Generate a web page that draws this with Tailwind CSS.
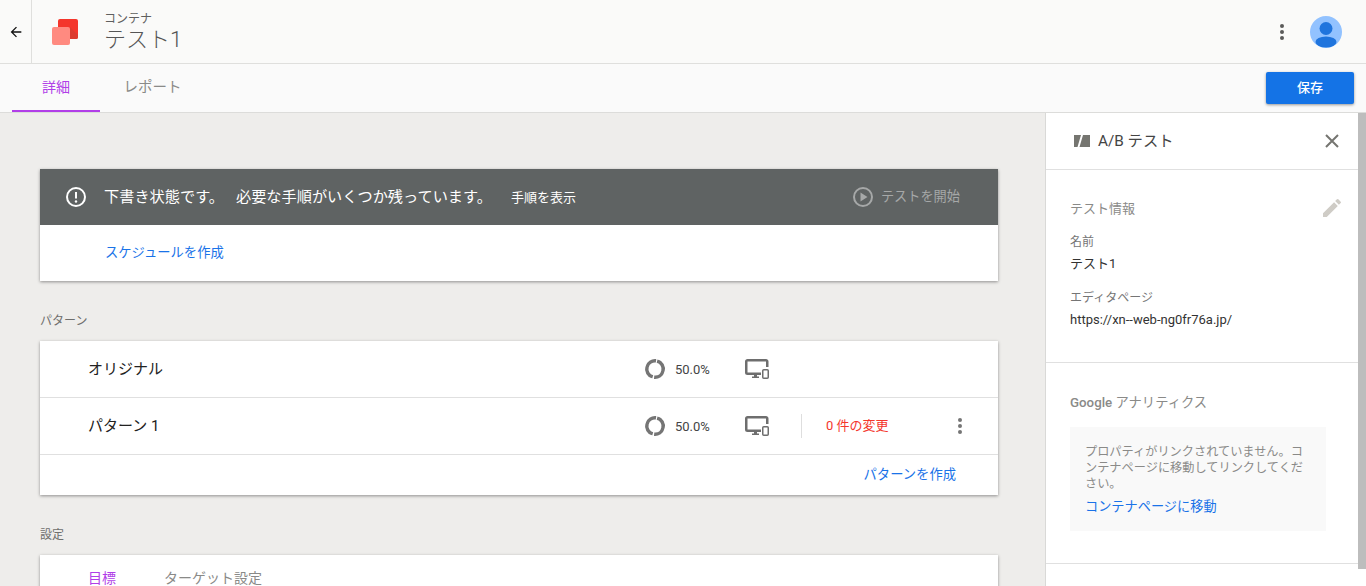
<!DOCTYPE html>
<html lang="ja">
<head>
  <meta charset="UTF-8" />
  <title>テスト1</title>
  <script src="https://cdn.jsdelivr.net/npm/@tailwindcss/browser@4"></script>
</head>
<body class="bg-[#eeedeb] font-['Roboto','Noto_Sans_CJK_JP',sans-serif] text-[#3c3c3c]">
  <div class="flex flex-col h-[586px] w-[1366px] overflow-hidden">

    <!-- header -->
    <header class="flex items-center h-[64px] shrink-0 bg-[#fafaf9] border-b border-[#dfdfdd]">
      <div class="flex items-center justify-center w-[32px] h-[63px] border-r border-[#dfdfdd]">
        <svg width="16" height="16" viewBox="0 0 24 24" fill="#111"><path d="M20 11H7.830l5.590-5.590L12 4l-8 8 8 8 1.410-1.410L7.830 13H20z"/></svg>
      </div>
      <svg class="ml-[20px]" width="26" height="26" viewBox="0 0 26 26">
        <rect x="6" y="0" width="20" height="20" rx="2" fill="#f4362c"/>
        <path d="M18 8l8 8v2a2 2 0 0 1-2 2h-6z" fill="#dc3b2f"/>
        <rect x="0" y="8" width="18" height="18" rx="2" fill="#ff8a80"/>
      </svg>
      <div class="ml-[26px] flex flex-col mt-[2px]">
        <span class="text-[12px] leading-[14px] text-[#5f5f5f] mt-[-1px]">コンテナ</span>
        <span class="text-[22px] leading-[26px] font-light text-[#555] mt-[1px]">テスト1</span>
      </div>
      <div class="ml-auto flex items-center">
        <svg width="4" height="16" viewBox="0 0 4 16" fill="#5a5a5a"><circle cx="2" cy="2" r="2"/><circle cx="2" cy="8" r="2"/><circle cx="2" cy="14" r="2"/></svg>
        <svg class="ml-[26px] mr-[24px]" width="32" height="32" viewBox="0 0 32 32">
          <clipPath id="avatar"><circle cx="16" cy="16" r="16"/></clipPath>
          <circle cx="16" cy="16" r="16" fill="#92c2ff"/>
          <circle cx="16" cy="12.500" r="6.500" fill="#1f74dd"/>
          <ellipse cx="16" cy="26" rx="10.500" ry="5.500" fill="#1f74dd" clip-path="url(#avatar)"/>
        </svg>
      </div>
    </header>

    <!-- tabs -->
    <div class="flex items-stretch h-[49px] shrink-0 bg-[#fafafa] border-b border-[#dcdcda] pl-[12px] pr-[12px] relative">
      <div class="w-[88px] flex items-center justify-center text-[14px] text-[#b13fe8] border-b-2 border-[#b13fe8] h-[48px]">詳細</div>
      <div class="w-[105px] flex items-center justify-center text-[14.500px] text-[#8a8a88]">レポート</div>
      <button class="ml-auto self-start mt-[8px] w-[88px] h-[32px] rounded-[2px] bg-[#1473e6] text-white text-[13px] font-medium shadow-[0_1px_3px_rgba(0,0,0,0.4)]">保存</button>
    </div>

    <div class="flex flex-1 min-h-0">
      <!-- main column -->
      <main class="w-[1045px] shrink-0 pl-[40px] pr-[47px] pt-[56px]">
        <section class="bg-white shadow-[0_1px_3px_rgba(0,0,0,0.4)]">
          <div class="flex items-center h-[56px] bg-[#5f6363] text-white pl-[25px] pr-[38px]">
            <svg width="22" height="22" viewBox="0 0 22 22" fill="none"><circle cx="11" cy="11" r="9" stroke="#fff" stroke-width="2"/><path d="M11 6v6.500" stroke="#fff" stroke-width="2"/><circle cx="11" cy="15.500" r="1.200" fill="#fff"/></svg>
            <span class="ml-[17px] text-[15.200px]">下書き状態です。</span>
            <span class="ml-[12px] text-[15.200px]">必要な手順がいくつか残っています。</span>
            <span class="ml-[19px] text-[13px] mt-[2px]">手順を表示</span>
            <div class="ml-auto flex items-center text-[#a6a8a8] text-[13.200px]">
              <svg width="22" height="22" viewBox="0 0 22 22" fill="none"><circle cx="11" cy="11" r="9" stroke="#a6a8a8" stroke-width="2"/><path d="M8.500 6.500v9l7-4.500z" fill="#a6a8a8"/></svg>
              <span class="ml-[7px]">テストを開始</span>
            </div>
          </div>
          <div class="flex items-center h-[56px] pl-[65px] pb-[1px] text-[13.300px] text-[#1a73e8]">スケジュールを作成</div>
        </section>

        <h2 class="mt-[30px] h-[20px] text-[12px] leading-[20px] text-[#6f6f6d]">パターン</h2>
        <section class="mt-[10px] bg-white shadow-[0_1px_3px_rgba(0,0,0,0.4)]">
          <div class="flex items-center h-[57px] pl-[48px] border-b border-[#e0e0e0]">
            <span class="w-[557px] text-[15px] text-[#222]">オリジナル</span>
            <svg class="rotate-[-75deg]" width="20" height="20" viewBox="0 0 20 20" fill="none"><circle cx="10" cy="10" r="8.250" stroke="#757575" stroke-width="3.500" stroke-dasharray="24.420 1.500 24.420 1.500"/></svg>
            <span class="ml-[10px] mt-[2px] w-[70px] text-[13px] text-[#444]">50.0%</span>
            <svg width="24" height="20" viewBox="0 0 24 20" fill="none" stroke="#6e6e6e" stroke-width="2.500"><path d="M16 14.750H2.500a1.250 1.250 0 0 1-1.250-1.250V2.500a1.250 1.250 0 0 1 1.250-1.250h18.500a1.250 1.250 0 0 1 1.250 1.250V8"/><path d="M9 15h3v2.500h2V19H7v-1.500h2z" fill="#6e6e6e" stroke="none"/><rect x="17.750" y="10.750" width="5.500" height="8.500" rx="1" stroke-width="1.500"/></svg>
          </div>
          <div class="flex items-center h-[57px] pl-[48px] border-b border-[#e0e0e0]">
            <span class="w-[557px] text-[15px] text-[#222]">パターン 1</span>
            <svg class="rotate-[-75deg]" width="20" height="20" viewBox="0 0 20 20" fill="none"><circle cx="10" cy="10" r="8.250" stroke="#757575" stroke-width="3.500" stroke-dasharray="24.420 1.500 24.420 1.500"/></svg>
            <span class="ml-[10px] mt-[2px] w-[70px] text-[13px] text-[#444]">50.0%</span>
            <svg width="24" height="20" viewBox="0 0 24 20" fill="none" stroke="#6e6e6e" stroke-width="2.500"><path d="M16 14.750H2.500a1.250 1.250 0 0 1-1.250-1.250V2.500a1.250 1.250 0 0 1 1.250-1.250h18.500a1.250 1.250 0 0 1 1.250 1.250V8"/><path d="M9 15h3v2.500h2V19H7v-1.500h2z" fill="#6e6e6e" stroke="none"/><rect x="17.750" y="10.750" width="5.500" height="8.500" rx="1" stroke-width="1.500"/></svg>
            <div class="ml-[32px] w-px h-[24px] bg-[#dedede]"></div>
            <span class="ml-[24px] w-[132px] text-[13px] text-[#f4362c]">0 件の変更</span>
            <svg width="4" height="16" viewBox="0 0 4 16" fill="#757575"><circle cx="2" cy="2" r="2"/><circle cx="2" cy="8" r="2"/><circle cx="2" cy="14" r="2"/></svg>
          </div>
          <div class="flex items-center justify-end h-[40px] pr-[42px] pb-[1px] text-[13.300px] text-[#1a73e8]">パターンを作成</div>
        </section>

        <h2 class="mt-[30px] h-[20px] text-[12px] leading-[20px] text-[#6f6f6d]">設定</h2>
        <section class="mt-[10px] bg-white shadow-[0_1px_3px_rgba(0,0,0,0.4)] h-[60px] pl-[48px] pt-[13px] flex text-[14px]">
          <span class="text-[#b13fe8]">目標</span>
          <span class="ml-[48px] text-[#8a8a88]">ターゲット設定</span>
        </section>
      </main>

      <!-- side panel -->
      <aside class="relative w-[321px] shrink-0 bg-white border-l border-[#d9d9d7]">
        <div class="flex items-center h-[57px] pl-[28px] pr-[27px] border-b border-[#e0e0e0]">
          <svg width="16" height="12" viewBox="0 0 16 12"><path d="M0 0h7L3.500 12H0z M9 0h7v12H5.500z" fill="#757570"/></svg>
          <span class="ml-[8px] text-[15.300px] text-[#444]">A/B テスト</span>
          <svg class="ml-auto" width="14" height="14" viewBox="0 0 14 14" stroke="#757570" stroke-width="2"><path d="M1 1l12 12M13 1L1 13"/></svg>
        </div>
        <div class="relative h-[193px] pl-[24px] pt-[29px] border-b border-[#e0e0e0]">
          <div class="text-[13px] leading-[20px] text-[#8a8a88]">テスト情報</div>
          <svg class="absolute top-[26px] right-[22px]" width="24" height="24" viewBox="0 0 24 24" fill="#cfccc6"><path d="M3 17.250V21h3.750L17.810 9.940l-3.750-3.750L3 17.250zM20.710 7.040a1 1 0 0 0 0-1.410l-2.340-2.340a1 1 0 0 0-1.410 0l-1.830 1.830 3.750 3.750 1.830-1.830z"/></svg>
          <div class="mt-[13px] text-[12px] leading-[20px] text-[#757575]">名前</div>
          <div class="text-[13px] leading-[24px] text-[#333]">テスト1</div>
          <div class="mt-[12px] text-[12px] leading-[20px] text-[#757575]">エディタページ</div>
          <div class="text-[13px] leading-[24px] text-[#333]">https://xn--web-ng0fr76a.jp/</div>
        </div>
        <div class="h-[201px] pl-[24px] pt-[30px] border-b border-[#e0e0e0]">
          <div class="text-[13.300px] leading-[20px] text-[#8a8a88] font-medium">Google <span class="font-normal">アナリティクス</span></div>
          <div class="mt-[14px] w-[256px] h-[104px] bg-[#f9f9f9] pl-[16px] pr-[15px] pt-[17px]">
            <p class="text-[12.200px] leading-[16px] text-[#8a8a88] -ml-px">プロパティがリンクされていません。コンテナページに移動してリンクしてください。</p>
            <div class="mt-[5px] -ml-px text-[13.200px] leading-[20px] text-[#1a73e8]">コンテナページに移動</div>
          </div>
        </div>
        <div class="absolute top-0 right-0 w-[8px] h-[456px] bg-[#bdbdbd]"></div>
      </aside>
    </div>
  </div>
</body>
</html>
